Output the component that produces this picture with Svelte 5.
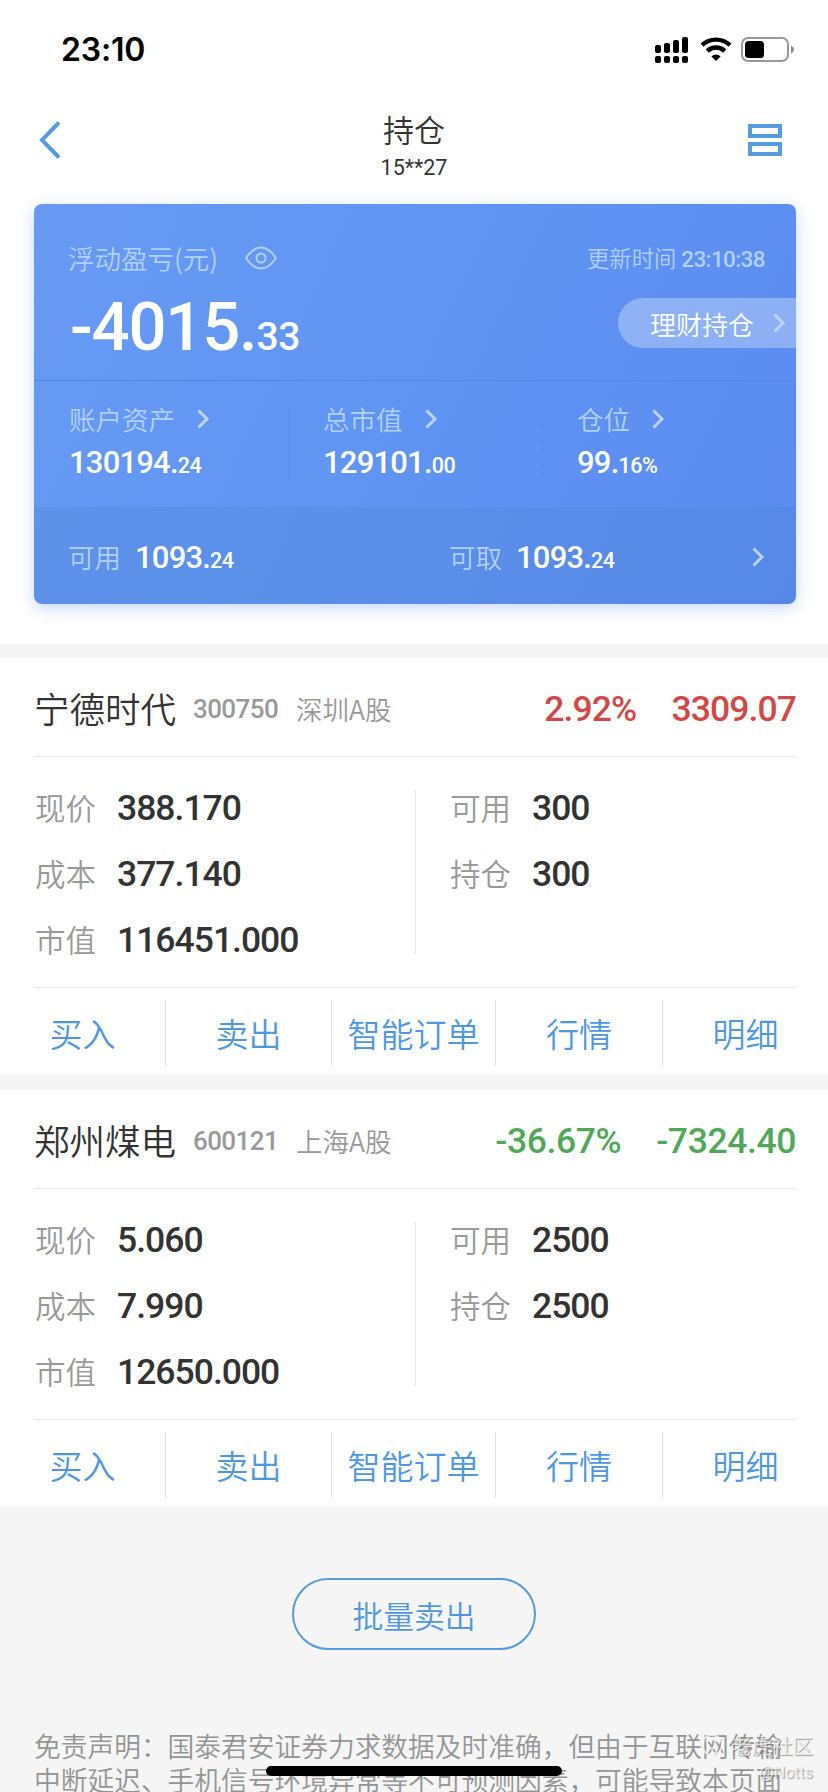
<script lang="ts">
  interface Amount {
    label: string;
    int: string;
    dec: string;
  }
  interface Field {
    label: string;
    value: string;
  }
  interface Holding {
    name: string;
    code: string;
    market: string;
    percent: string;
    profit: string;
    up: boolean;
    prices: Field[];
    amounts: Field[];
  }

  const summary: Amount[] = [
    { label: '账户资产', int: '130194.', dec: '24' },
    { label: '总市值', int: '129101.', dec: '00' },
    { label: '仓位', int: '99.', dec: '16%' },
  ];

  const cash: Amount[] = [
    { label: '可用', int: '1093.', dec: '24' },
    { label: '可取', int: '1093.', dec: '24' },
  ];

  const holdings: Holding[] = [
    {
      name: '宁德时代',
      code: '300750',
      market: '深圳A股',
      percent: '2.92%',
      profit: '3309.07',
      up: true,
      prices: [
        { label: '现价', value: '388.170' },
        { label: '成本', value: '377.140' },
        { label: '市值', value: '116451.000' },
      ],
      amounts: [
        { label: '可用', value: '300' },
        { label: '持仓', value: '300' },
      ],
    },
    {
      name: '郑州煤电',
      code: '600121',
      market: '上海A股',
      percent: '-36.67%',
      profit: '-7324.40',
      up: false,
      prices: [
        { label: '现价', value: '5.060' },
        { label: '成本', value: '7.990' },
        { label: '市值', value: '12650.000' },
      ],
      amounts: [
        { label: '可用', value: '2500' },
        { label: '持仓', value: '2500' },
      ],
    },
  ];

  const actions = ['买入', '卖出', '智能订单', '行情', '明细'];
  const signal = [8, 10, 13, 16];
</script>

{#snippet chevron()}
  <svg class="chevron" width="14" height="20" viewBox="0 0 14 20">
    <path d="M2.5 1.5 L11 10 L2.5 18.5" fill="none" stroke="currentColor" stroke-width="3" />
  </svg>
{/snippet}

<div class="screen">
  <header class="status">
    <span class="time">23:10</span>
    <div class="status-icons">
      <svg width="34" height="26" viewBox="0 0 34 26">
        {#each signal as h, i}
          <rect x={i * 9} y={16 - h} width="6" height={h} rx="2" />
          <rect x={i * 9} y="19" width="6" height="7" rx="2" />
        {/each}
      </svg>
      <svg class="wifi" width="32" height="24" viewBox="0 0 32 24">
        <path d="M2 8.2 A20.5 20.5 0 0 1 30 8.2" fill="none" stroke="#000" stroke-width="4.4" />
        <path d="M7.2 14.1 A12.7 12.7 0 0 1 24.8 14.1" fill="none" stroke="#000" stroke-width="4.4" />
        <path d="M11.4 19.4 A6.8 6.8 0 0 1 20.6 19.4 L16 24 Z" />
      </svg>
      <svg class="battery" width="54" height="26" viewBox="0 0 54 26">
        <rect x="1" y="1" width="46" height="23" rx="6" fill="none" stroke="#999" stroke-width="2" />
        <rect x="4" y="4" width="19" height="17" rx="3.5" />
        <path d="M50 8.500 Q53 10 53 12.500 Q53 15 50 16.500 Z" fill="#8e8e8e" />
      </svg>
    </div>
  </header>

  <nav class="nav">
    <svg class="back" width="24" height="40" viewBox="0 0 24 40">
      <path d="M20 2.500 L3 20 L20 37.500" fill="none" stroke="#579bdf" stroke-width="4" />
    </svg>
    <div class="title">
      <h1>持仓</h1>
      <span class="num account">15**27</span>
    </div>
    <svg class="menu" width="34" height="32" viewBox="0 0 34 32">
      <rect x="2" y="2" width="30" height="10" fill="none" stroke="#579bdf" stroke-width="4" />
      <rect x="2" y="20" width="30" height="10" fill="none" stroke="#579bdf" stroke-width="4" />
    </svg>
  </nav>

  <section class="card">
    <div class="top">
      <div class="top-row">
        <span class="muted">浮动盈亏(元)</span>
        <svg class="eye" width="34" height="24" viewBox="0 0 34 24">
          <path
            d="M2 12 C7 4.500 12 1.500 17 1.500 S27 4.500 32 12 C27 19.500 22 22.500 17 22.500 S7 19.500 2 12 Z"
            fill="none"
            stroke="currentColor"
            stroke-width="2"
          />
          <circle cx="17" cy="12" r="4.5" fill="none" stroke="currentColor" stroke-width="2" />
        </svg>
        <span class="updated">更新时间 <span class="num">23:10:38</span></span>
      </div>
      <div class="profit-row">
        <div class="num profit">-4015.<small>33</small></div>
        <button class="wealth">理财持仓{@render chevron()}</button>
      </div>
    </div>
    <div class="summary">
      {#each summary as item}
        <div class="cell">
          <div class="muted cell-label">{item.label}{@render chevron()}</div>
          <div class="num amount">{item.int}<small>{item.dec}</small></div>
        </div>
      {/each}
    </div>
    <div class="cash">
      {#each cash as item}
        <div class="cash-item">
          <span class="muted">{item.label}</span>
          <span class="num amount">{item.int}<small>{item.dec}</small></span>
        </div>
      {/each}
      {@render chevron()}
    </div>
  </section>

  {#each holdings as h}
    <section class="holding">
      <div class="holding-head">
        <h2>{h.name}</h2>
        <span class="num code">{h.code}</span>
        <span class="market">{h.market}</span>
        <div class="num change" class:up={h.up}>
          <span>{h.percent}</span>
          <span>{h.profit}</span>
        </div>
      </div>
      <div class="details">
        {#each [h.prices, h.amounts] as fields}
          <dl>
            {#each fields as f}
              <div class="field">
                <dt>{f.label}</dt>
                <dd class="num">{f.value}</dd>
              </div>
            {/each}
          </dl>
        {/each}
      </div>
      <div class="actions">
        {#each actions as action}
          <button>{action}</button>
        {/each}
      </div>
    </section>
  {/each}

  <footer>
    <button class="batch">批量卖出</button>
    <p>免责声明：国泰君安证券力求数据及时准确，但由于互联网传输<br />中断延迟、手机信号环境异常等不可预测因素，可能导致本页面</p>
  </footer>

  <div class="home-indicator"></div>
  <div class="watermark">
    <div class="brand">
      <svg width="24" height="24" viewBox="0 0 24 24" fill="none" stroke="currentColor" stroke-width="2">
        <circle cx="12" cy="12" r="10" />
        <path d="M6 9 Q12 4 18 9 M8 14 Q12 18 17 12" />
      </svg>
      老虎社区
    </div>
    <div class="handle">@Notts</div>
  </div>
</div>

<style>
  :global(body) {
    margin: 0;
    background: #f5f5f5;
  }
  .screen {
    position: relative;
    width: 828px;
    height: 1792px;
    overflow: hidden;
    background: #f5f5f5;
    color: #333;
    font-family: 'Noto Sans CJK SC', sans-serif;
    font-weight: 350;
  }
  h1, h2, p, dl, dd { margin: 0; font-weight: inherit; }
  button {
    padding: 0;
    border: 0;
    background: none;
    font: inherit;
    color: #4f98e0;
  }
  svg { display: block; flex: none; }
  .num { font-family: Roboto, sans-serif; font-weight: 500; }

  .status {
    display: flex;
    justify-content: space-between;
    box-sizing: border-box;
    height: 100px;
    padding: 30px 33px 0 61px;
    background: #fff;
  }
  .time {
    font: 600 32px/40px Inter, sans-serif;
    letter-spacing: -0.2px;
    color: #000;
  }
  .status-icons { display: flex; padding-top: 7px; }
  .wifi { margin-left: 11px; }
  .battery { margin-left: 9px; }

  .nav {
    display: grid;
    grid-template-columns: 34px 1fr 34px;
    align-items: start;
    box-sizing: border-box;
    height: 80px;
    padding: 0 46px 0 39px;
    background: #fff;
  }
  .back { margin-top: 20px; }
  .menu { margin-top: 24px; }
  .title {
    display: flex;
    flex-direction: column;
    align-items: center;
    padding: 11px 0 0 7px;
  }
  h1 { font-size: 31px; line-height: 36px; }
  .account { padding-top: 4px; font-size: 21.500px; line-height: 34px; font-weight: 400; }

  .card {
    display: grid;
    grid-template-columns: 762px;
    grid-template-rows: 177px 126px 97px;
    box-sizing: border-box;
    height: 464px;
    padding: 24px 32px 40px 34px;
    background: #fff;
    color: #fff;
    position: relative;
    z-index: 0;
  }
  /* gradient plate under the three rows of the card */
  .card::before {
    content: '';
    position: absolute;
    z-index: -1;
    inset: 24px 32px 40px 34px;
    border-radius: 8px;
    background: linear-gradient(115deg, #689af3 0%, #6095f2 45%, #5a8bf0 100%);
    box-shadow: 0 4px 16px rgba(90, 140, 240, 0.35);
  }
  .muted {
    font-size: 26.500px;
    line-height: 36px;
    color: #b2d0fc;
  }
  .top {
    box-sizing: border-box;
    padding: 36px 0 0 34px;
    border-bottom: 1px solid #5287e4;
  }
  .top-row {
    display: flex;
    align-items: center;
    height: 36px;
    padding-right: 31px;
  }
  .eye { margin-left: 26px; color: #b2d0fc; }
  .updated {
    margin-left: auto;
    font-size: 22.300px;
    line-height: 36px;
    color: #b2d0fc;
  }
  .updated .num { font-size: 22.500px; letter-spacing: -0.6px; }
  .profit-row { display: flex; justify-content: space-between; }
  .profit {
    margin: 7px 0 0 2px;
    font-size: 67px;
    line-height: 88px;
    letter-spacing: -1.2px;
  }
  .profit small { font-size: 39px; letter-spacing: -0.5px; }
  .wealth {
    display: flex;
    align-items: center;
    justify-content: space-between;
    box-sizing: border-box;
    width: 178px;
    height: 50px;
    margin-top: 22px;
    padding: 0 10px 0 32px;
    border-radius: 25px 0 0 25px;
    background: rgba(255, 255, 255, 0.3);
    font-size: 26px;
    color: #fff;
  }
  .chevron { color: #bcd4fb; }

  .summary { display: grid; grid-template-columns: repeat(3, 254px); }
  .cell { padding: 20px 0 0 35px; }
  .cell + .cell {
    background: repeating-linear-gradient(#5489ec 0 2px, transparent 2px 4px) 0 27px / 1px 72px no-repeat;
  }
  .cell-label { display: flex; align-items: center; gap: 21px; }
  .amount { padding-top: 2px; font-size: 31px; line-height: 48px; letter-spacing: -0.8px; }
  .amount small { font-size: 21.500px; letter-spacing: -0.5px; }
  .cash {
    display: flex;
    align-items: center;
    border-radius: 0 0 8px 8px;
    background: rgba(72, 128, 200, 0.22);
    padding: 3px 31px 0 34px;
  }
  .cash-item { display: flex; align-items: center; width: 381px; gap: 14px; }
  .cash-item .amount { padding-top: 4px; }
  .cash-item + .cash-item { width: 302px; }

  .holding {
    box-sizing: border-box;
    height: 416px;
    padding: 0 32px 0 34px;
    background: #fff;
  }
  .holding { margin-top: 14px; }
  .holding + .holding { margin-top: 16px; }
  .holding-head {
    display: flex;
    align-items: center;
    height: 98px;
    border-bottom: 1px solid #e6e6e6;
  }
  h2 { padding-top: 2px; font-size: 35.500px; line-height: 98px; }
  .code { margin-left: 17px; padding-top: 4px; font-size: 26px; letter-spacing: -0.6px; color: #999; }
  .market { margin-left: 18px; padding-top: 2px; font-size: 26.500px; color: #999; }
  .change {
    display: flex;
    gap: 35px;
    margin-left: auto;
    padding-top: 3px;
    font-size: 35.500px;
    letter-spacing: -0.4px;
    color: #51a85b;
  }
  .change.up { color: #d14848; letter-spacing: -0.9px; }
  .details {
    display: grid;
    grid-template-columns: 381px 381px;
    height: 230px;
    border-bottom: 1px solid #e6e6e6;
  }
  dl { display: grid; grid-auto-rows: 66px; padding: 16px 0 0 1px; align-content: start; }
  dl + dl {
    padding-left: 35px;
    background: linear-gradient(#e6e6e6, #e6e6e6) 0 33px / 1px 164px no-repeat;
  }
  .field { display: flex; align-items: center; gap: 21px; }
  dt { padding-top: 1px; font-size: 30.500px; color: #999; }
  dd { padding-top: 3px; font-size: 35.500px; letter-spacing: -1px; }
  .actions {
    display: grid;
    grid-template-columns: 165px 166px 164px 167px 166px;
    height: 66px;
    margin: 0 -32px 0 -34px;
    padding-top: 12px;
  }
  .actions button { font-size: 33px; line-height: 66px; white-space: nowrap; }
  .actions button + button { border-left: 1px solid #e0e0e0; }

  footer { display: flex; flex-direction: column; align-items: center; }
  .batch {
    box-sizing: border-box;
    width: 244px;
    height: 72px;
    margin-top: 72px;
    border: 2px solid #579bdf;
    border-radius: 36px;
    font-size: 30.800px;
  }
  p {
    align-self: flex-start;
    margin: 79px 0 0 34px;
    font-size: 26.730px;
    line-height: 34px;
    white-space: nowrap;
    color: #949494;
  }
  .home-indicator {
    position: absolute;
    left: 266px;
    top: 1766px;
    width: 296px;
    height: 10px;
    border-radius: 5px;
    background: #000;
  }
  .watermark {
    position: absolute;
    right: 15px;
    top: 1729px;
    text-align: right;
    font-weight: 400;
    color: rgba(245, 245, 245, 0.8);
    text-shadow: 1px 1px 1px rgba(0, 0, 0, 0.35);
  }
  .brand {
    display: flex;
    align-items: center;
    gap: 7px;
    font-size: 20.500px;
    line-height: 32px;
  }
  .handle { font: 400 16px/24px Roboto, sans-serif; }
</style>
